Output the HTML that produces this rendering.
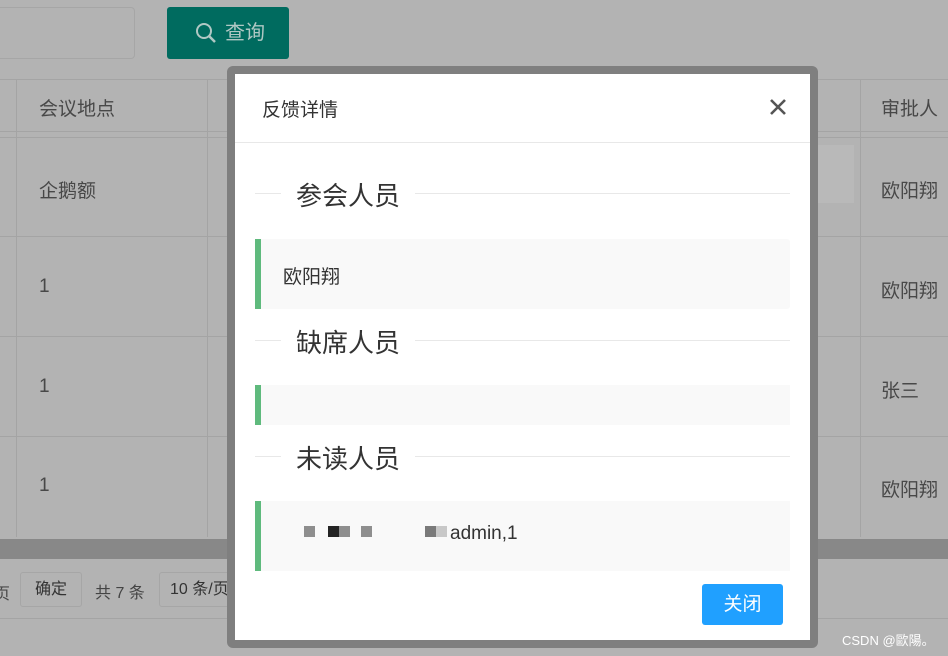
<!DOCTYPE html>
<html><head><meta charset="utf-8"><style>
*{margin:0;padding:0;box-sizing:border-box}
body{width:948px;height:656px;position:relative;overflow:hidden;background:#b3b3b3;font-family:"Liberation Sans","Noto Sans CJK SC",sans-serif;color:#444}
.a{position:absolute}
.t{font-size:19px;color:#484848}
.hl{position:absolute;left:0;width:948px;height:1px;background:#a4a4a4}
.vl{position:absolute;top:80px;height:457px;width:1px;background:#a4a4a4}
</style></head><body>
<div class="a" style="left:-5px;top:7px;width:140px;height:52px;border:1px solid #a6a6a6;border-radius:4px"></div>
<div class="a" style="left:167px;top:7px;width:122px;height:52px;background:#006b5f;border-radius:3px;color:#b0c8c4;font-size:20px;line-height:52px;padding-left:30px">
<svg class="a" style="left:28px;top:15px" width="22" height="22" viewBox="0 0 22 22"><circle cx="9" cy="9" r="7" fill="none" stroke="#b0c8c4" stroke-width="2"/><line x1="14" y1="14" x2="20" y2="20" stroke="#b0c8c4" stroke-width="2.5"/></svg>
<span style="margin-left:28px">查询</span></div>
<div class="hl" style="top:79px"></div><div class="hl" style="top:131px"></div><div class="hl" style="top:137px"></div><div class="hl" style="top:236px"></div><div class="hl" style="top:336px"></div><div class="hl" style="top:436px"></div>
<div class="vl" style="left:16px"></div><div class="vl" style="left:207px"></div><div class="vl" style="left:860px"></div>
<div class="a t" style="left:39px;top:94px">会议地点</div>
<div class="a t" style="left:39px;top:176px">企鹅额</div>
<div class="a t" style="left:39px;top:276px">1</div>
<div class="a t" style="left:39px;top:376px">1</div>
<div class="a t" style="left:39px;top:475px">1</div>
<div class="a t" style="left:228px;top:176px">2</div><div class="a t" style="left:228px;top:276px">2</div><div class="a t" style="left:228px;top:376px">2</div><div class="a t" style="left:228px;top:475px">2</div>
<div class="a t" style="left:881px;top:94px">审批人</div>
<div class="a t" style="left:881px;top:176px">欧阳翔</div>
<div class="a t" style="left:881px;top:276px">欧阳翔</div>
<div class="a t" style="left:881px;top:376px">张三</div>
<div class="a t" style="left:881px;top:475px">欧阳翔</div>
<div class="a" style="left:810px;top:145px;width:44px;height:58px;background:#b9b9b9"></div>
<div class="a" style="left:0;top:539px;width:948px;height:20px;background:#888"></div>
<div class="hl" style="top:618px"></div>
<div class="a t" style="left:-6px;top:580px;font-size:16px">页</div>
<div class="a" style="left:20px;top:572px;width:62px;height:35px;border:1px solid #a6a6a6;border-radius:3px;font-size:16px;line-height:33px;text-align:center;color:#333">确定</div>
<div class="a" style="left:95px;top:579px;font-size:16px;color:#444">共 7 条</div>
<div class="a" style="left:159px;top:572px;width:80px;height:35px;border:1px solid #a6a6a6;border-radius:3px;font-size:16px;line-height:33px;padding-left:10px;color:#333;white-space:nowrap;overflow:hidden">10 条/页</div>
<div class="a" style="left:842px;top:630px;font-size:13px;color:#fff">CSDN @歐陽。</div>

<div class="a" style="left:227px;top:66px;width:591px;height:582px;background:#7f7f7f;border-radius:6px"></div>
<div class="a" style="left:235px;top:74px;width:575px;height:566px;background:#fff">
 <div class="a" style="left:27px;top:21px;font-size:19px;color:#333">反馈详情</div>
 <svg class="a" style="left:534px;top:24px" width="18" height="18" viewBox="0 0 18 18"><path d="M2 2L16 16M16 2L2 16" stroke="#555" stroke-width="2.6"/></svg>
 <div class="a" style="left:0;top:68px;width:575px;height:1px;background:#e8e8e8"></div>

 <div class="a" style="left:20px;top:119px;width:535px;height:1px;background:#e8e8e8"></div>
 <div class="a" style="left:46px;top:102px;background:#fff;padding:0 15px;font-size:26px;color:#333">参会人员</div>
 <div class="a" style="left:20px;top:165px;width:535px;height:70px;background:#f9f9f9;border-left:6px solid #5fba7d;border-radius:0 3px 3px 0"></div>
 <div class="a" style="left:48px;top:188px;font-size:19px;color:#333">欧阳翔</div>

 <div class="a" style="left:20px;top:266px;width:535px;height:1px;background:#e8e8e8"></div>
 <div class="a" style="left:46px;top:249px;background:#fff;padding:0 15px;font-size:26px;color:#333">缺席人员</div>
 <div class="a" style="left:20px;top:311px;width:535px;height:40px;background:#f9f9f9;border-left:6px solid #5fba7d"></div>

 <div class="a" style="left:20px;top:382px;width:535px;height:1px;background:#e8e8e8"></div>
 <div class="a" style="left:46px;top:365px;background:#fff;padding:0 15px;font-size:26px;color:#333">未读人员</div>
 <div class="a" style="left:20px;top:427px;width:535px;height:70px;background:#f9f9f9;border-left:6px solid #5fba7d"></div>
 <div class="a" style="left:69px;top:452px;width:11px;height:11px;background:#8e8e8e"></div>
 <div class="a" style="left:93px;top:452px;width:11px;height:11px;background:#242424"></div>
 <div class="a" style="left:104px;top:452px;width:11px;height:11px;background:#8e8e8e"></div>
 <div class="a" style="left:126px;top:452px;width:11px;height:11px;background:#8e8e8e"></div>
 <div class="a" style="left:190px;top:452px;width:11px;height:11px;background:#7a7a7a"></div>
 <div class="a" style="left:201px;top:452px;width:11px;height:11px;background:#c8c8c8"></div>
 <div class="a" style="left:215px;top:449px;font-size:19px;color:#333">admin,1</div>

 <div class="a" style="left:467px;top:510px;width:81px;height:41px;background:#20a0ff;border-radius:3px;color:#fff;font-size:19px;line-height:41px;text-align:center">关闭</div>
</div>
</body></html>
